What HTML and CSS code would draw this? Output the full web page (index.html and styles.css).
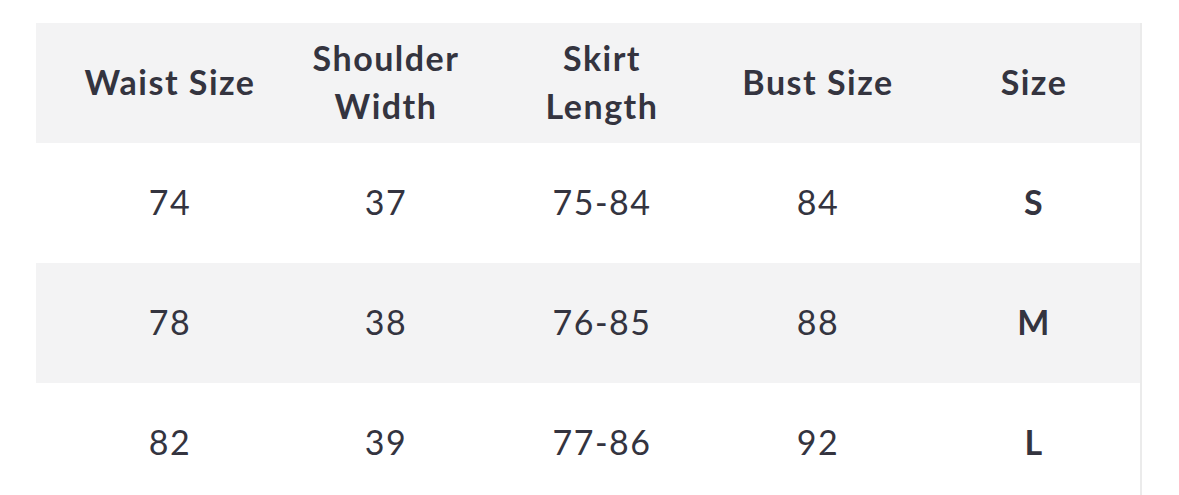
FILE: index.html
```html
<!DOCTYPE html>
<html>
<head>
<meta charset="utf-8">
<link rel="stylesheet" href="styles.css">
</head>
<body>
<div class="page">
  <div class="table">
    <div class="row head">
      <div class="cell">Waist Size</div>
      <div class="cell">Shoulder<br>Width</div>
      <div class="cell">Skirt<br>Length</div>
      <div class="cell">Bust Size</div>
      <div class="cell">Size</div>
    </div>
    <div class="row">
      <div class="cell">74</div>
      <div class="cell">37</div>
      <div class="cell">75-84</div>
      <div class="cell">84</div>
      <div class="cell size">S</div>
    </div>
    <div class="row alt">
      <div class="cell">78</div>
      <div class="cell">38</div>
      <div class="cell">76-85</div>
      <div class="cell">88</div>
      <div class="cell size">M</div>
    </div>
    <div class="row">
      <div class="cell">82</div>
      <div class="cell">39</div>
      <div class="cell">77-86</div>
      <div class="cell">92</div>
      <div class="cell size">L</div>
    </div>
  </div>
</div>
</body>
</html>
```
FILE: styles.css
```css
html, body {
  margin: 0;
  padding: 0;
  background: #ffffff;
  overflow: hidden;
}
.page {
  padding: 23px 0 0 36px;
  width: 1179px;
  box-sizing: border-box;
}
.table {
  width: 1104px;
  border-right: 2px solid #ebebeb;
  font-family: "Lato", "Liberation Sans", sans-serif;
  color: #34343f;
}
.row {
  display: grid;
  grid-template-columns: repeat(5, 216px);
  padding: 0 0 4px 26px;
  box-sizing: border-box;
  height: 120px;
  align-items: center;
  font-size: 34px;
  letter-spacing: 1.5px;
}
.head {
  background: #f3f3f4;
  font-weight: 700;
  line-height: 48px;
  padding-bottom: 2px;
}
.alt {
  background: #f3f3f4;
}
.cell {
  text-align: center;
}
.size {
  font-weight: 700;
}
```
